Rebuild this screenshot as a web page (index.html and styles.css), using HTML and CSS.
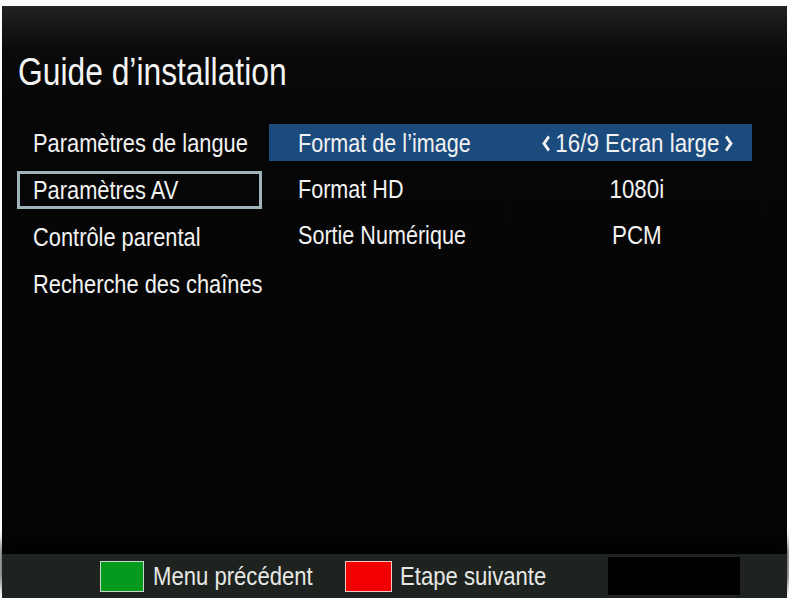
FILE: index.html
```html
<!DOCTYPE html>
<html lang="fr">
<head>
<meta charset="utf-8">
<title>Guide d'installation</title>
<link rel="stylesheet" href="styles.css">
</head>
<body>
<div class="screen">
  <h1 class="title"><span class="narrow">Guide d’installation</span></h1>
  <div class="content">
    <ul class="menu">
      <li class="menu-item"><span class="narrow">Paramètres de langue</span></li>
      <li class="menu-item is-focused"><span class="narrow">Paramètres AV</span></li>
      <li class="menu-item"><span class="narrow">Contrôle parental</span></li>
      <li class="menu-item"><span class="narrow">Recherche des chaînes</span></li>
    </ul>
    <div class="settings">
      <div class="setting is-selected">
        <span class="label"><span class="narrow">Format de l’image</span></span>
        <span class="value">
          <span class="narrow-c">
            <svg class="chev" width="11" height="17" viewBox="0 0 11 17"><path d="M8.5 1.5 L2.8 8.5 L8.5 15.5" fill="none" stroke="#f2f2f2" stroke-width="3.2"/></svg>
            <span>16/9 Ecran large</span>
            <svg class="chev" width="11" height="17" viewBox="0 0 11 17"><path d="M2.5 1.5 L8.2 8.5 L2.5 15.5" fill="none" stroke="#f2f2f2" stroke-width="3.2"/></svg>
          </span>
        </span>
      </div>
      <div class="setting">
        <span class="label"><span class="narrow">Format HD</span></span>
        <span class="value"><span class="narrow-c">1080i</span></span>
      </div>
      <div class="setting">
        <span class="label"><span class="narrow">Sortie Numérique</span></span>
        <span class="value"><span class="narrow-c">PCM</span></span>
      </div>
    </div>
  </div>
  <div class="footer">
    <span class="key key-green"></span>
    <span class="key-label key-label-1"><span class="narrow">Menu précédent</span></span>
    <span class="key key-red"></span>
    <span class="key-label key-label-2"><span class="narrow">Etape suivante</span></span>
    <span class="blank"></span>
  </div>
</div>
</body>
</html>
```
FILE: styles.css
```css
html, body {
  margin: 0;
  padding: 0;
  background: #ffffff;
}
body {
  font-family: "Liberation Sans", Arial, sans-serif;
  color: #f2f2f2;
}
.narrow {
  display: inline-block;
  white-space: nowrap;
  transform: scaleX(0.83);
  transform-origin: left center;
}
.narrow-c {
  display: inline-flex;
  align-items: center;
  gap: 5px;
  white-space: nowrap;
  transform: scaleX(0.86);
  transform-origin: center center;
}
.screen {
  margin: 6px 2px 0 2px;
  height: 592px;
  display: flex;
  flex-direction: column;
  background: linear-gradient(to bottom, #222222 0px, #151515 22px, #0a0a0a 45px, #060606 120px, #050505 100%);
}
.title {
  margin: 0;
  padding: 44px 0 0 16px;
  height: 118px;
  box-sizing: border-box;
  font-weight: normal;
  font-size: 39px;
  line-height: 44px;
  color: #f4f4f4;
}
.title .narrow {
  transform: scaleX(0.815);
}
.content {
  display: flex;
  flex: 1;
}
.menu {
  list-style: none;
  margin: 0;
  padding: 0 0 0 15px;
  width: 245px;
  flex: none;
  display: flex;
  flex-direction: column;
  gap: 9px;
}
.menu-item {
  height: 38px;
  box-sizing: border-box;
  border: 3px solid transparent;
  padding-left: 13px;
  font-size: 26px;
  line-height: 33px;
  white-space: nowrap;
}
.menu-item .narrow {
  transform: scaleX(0.84);
}
.menu-item.is-focused {
  border-color: #9fb3bb;
}
.settings {
  margin-left: 7px;
  width: 483px;
  flex: none;
  display: flex;
  flex-direction: column;
  gap: 9px;
}
.setting {
  height: 37px;
  box-sizing: border-box;
  display: flex;
  align-items: center;
  padding: 1px 13px 0 29px;
  font-size: 26px;
  white-space: nowrap;
}
.setting.is-selected {
  background: #1b4a7c;
}
.label {
  width: 237px;
  flex: none;
}
.value {
  width: 204px;
  flex: none;
  display: flex;
  align-items: center;
  justify-content: center;
}
.chev {
  display: block;
}
.footer {
  height: 44px;
  flex: none;
  background: #1f231f;
  display: flex;
  align-items: center;
  padding-left: 98px;
  box-shadow: 0 -12px 14px #020202;
}
.key {
  width: 44px;
  height: 31px;
  flex: none;
  box-sizing: border-box;
  border: 1px solid #c9d6c9;
}
.key-green {
  background: #049a1e;
  margin-right: 9px;
}
.key-red {
  width: 47px;
  background: #f40000;
  border-color: #f0c8c8;
  margin-right: 8px;
}
.key-label {
  flex: none;
  font-size: 26px;
  color: #e6e8e6;
  white-space: nowrap;
}
.key-label .narrow {
  transform: scaleX(0.85);
}
.key-label-1 {
  width: 192px;
}
.key-label-2 {
  width: 208px;
}
.blank {
  width: 132px;
  height: 38px;
  flex: none;
  background: #000000;
}
```
